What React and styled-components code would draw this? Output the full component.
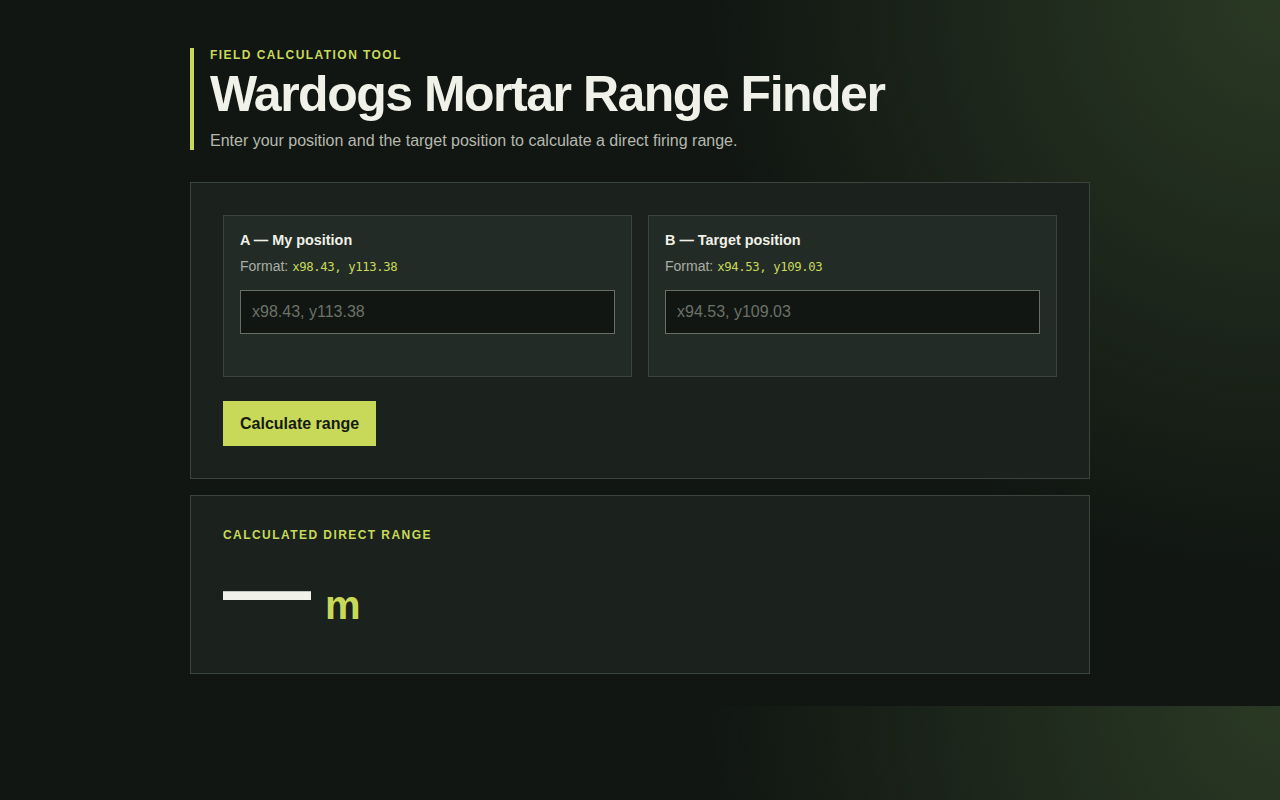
import styled, { createGlobalStyle } from 'styled-components'

const GlobalStyle = createGlobalStyle`
    * {
        box-sizing: border-box;
    }
    body {
        margin: 0;
        font-family: "Liberation Sans", Arial, sans-serif;
        color: #f0f1e8;
        background:
            radial-gradient(circle at 100% 0%, rgba(72, 100, 58, 0.45), rgba(72, 100, 58, 0) 39%),
            #111612;
    }
`

const Page = styled.main`
    width: 900px;
    margin: 0 auto;
    padding: 48px 0 32px;
`

const Header = styled.header`
    border-left: 4px solid #c8d95a;
    padding-left: 16px;
    margin-bottom: 32px;
`

const Eyebrow = styled.div`
    font-size: 12px;
    line-height: 14px;
    font-weight: 700;
    letter-spacing: 0.12em;
    text-transform: uppercase;
    color: #c8d95a;
`

const Title = styled.h1`
    margin: 4px 0 0;
    font-size: 50px;
    line-height: 57px;
    font-weight: 700;
    letter-spacing: -0.03em;
    color: #f0f1e8;
`

const Subtitle = styled.p`
    margin: 8px 0 0;
    font-size: 16px;
    line-height: 19px;
    color: #b6b9af;
`

const Card = styled.section`
    background: #1b221d;
    border: 1px solid #3b443d;
    padding: 32px;
    & + & {
        margin-top: 16px;
    }
`

const Grid = styled.div`
    display: grid;
    grid-template-columns: 1fr 1fr;
    gap: 16px;
`

const Panel = styled.div`
    background: #232b26;
    border: 1px solid #3b443d;
    padding: 16px;
`

const PanelTitle = styled.label`
    display: block;
    font-size: 14.4px;
    font-weight: 700;
    color: #f0f1e8;
`

const Hint = styled.div`
    margin-top: 9px;
    font-size: 14px;
    line-height: 1.4;
    color: #a9ada4;
`

const Code = styled.code`
    font-family: "DejaVu Sans Mono", "Liberation Mono", monospace;
    font-size: 12.3px;
    letter-spacing: -0.4px;
    color: #c8d95a;
`

const Input = styled.input`
    display: block;
    width: 100%;
    height: 44px;
    margin-top: 13px;
    padding: 0 11px;
    background: #111612;
    border: 1px solid #657065;
    border-radius: 0;
    font-family: "Liberation Sans", Arial, sans-serif;
    font-size: 16px;
    color: #f0f1e8;
    outline: none;

    &::placeholder {
        color: #6c7169;
    }
`

const FieldError = styled.div`
    min-height: 18px;
    margin-top: 8px;
    font-size: 13px;
    color: #e0775a;
`

const Button = styled.button`
    margin-top: 24px;
    padding: 13px 17px;
    border: none;
    border-radius: 0;
    background: #c8d95a;
    color: #161b12;
    font-family: "Liberation Sans", Arial, sans-serif;
    font-size: 16px;
    line-height: 19px;
    font-weight: 700;
    cursor: pointer;
`

const ResultLabel = styled.div`
    font-size: 12px;
    font-weight: 700;
    letter-spacing: 0.12em;
    text-transform: uppercase;
    color: #c8d95a;
`

const ResultRow = styled.div`
    display: flex;
    align-items: baseline;
    margin: 3px 0 8px;
`

const Value = styled.span`
    font-size: 88px;
    line-height: 1;
    font-weight: 700;
    color: #f0f1e8;
`

const Unit = styled.span`
    margin-left: 14px;
    font-size: 40px;
    font-weight: 700;
    color: #c8d95a;
`

const fields = [
    { id: 'a', title: 'A — My position', example: 'x98.43, y113.38' },
    { id: 'b', title: 'B — Target position', example: 'x94.53, y109.03' },
]

const App = () => {
  return (
    <>
      <GlobalStyle />
      <Page>
        <Header>
          <Eyebrow>Field calculation tool</Eyebrow>
          <Title>Wardogs Mortar Range Finder</Title>
          <Subtitle>Enter your position and the target position to calculate a direct firing range.</Subtitle>
        </Header>

        <Card>
          <Grid>
            {fields.map(f => (
              <Panel key={f.id}>
                <PanelTitle htmlFor={f.id}>{f.title}</PanelTitle>
                <Hint>Format: <Code>{f.example}</Code></Hint>
                <Input id={f.id} placeholder={f.example} />
                <FieldError />
              </Panel>
            ))}
          </Grid>
          <Button>Calculate range</Button>
        </Card>

        <Card>
          <ResultLabel>Calculated direct range</ResultLabel>
          <ResultRow>
            <Value>—</Value>
            <Unit>m</Unit>
          </ResultRow>
        </Card>
      </Page>
    </>
  )
}

export default App
